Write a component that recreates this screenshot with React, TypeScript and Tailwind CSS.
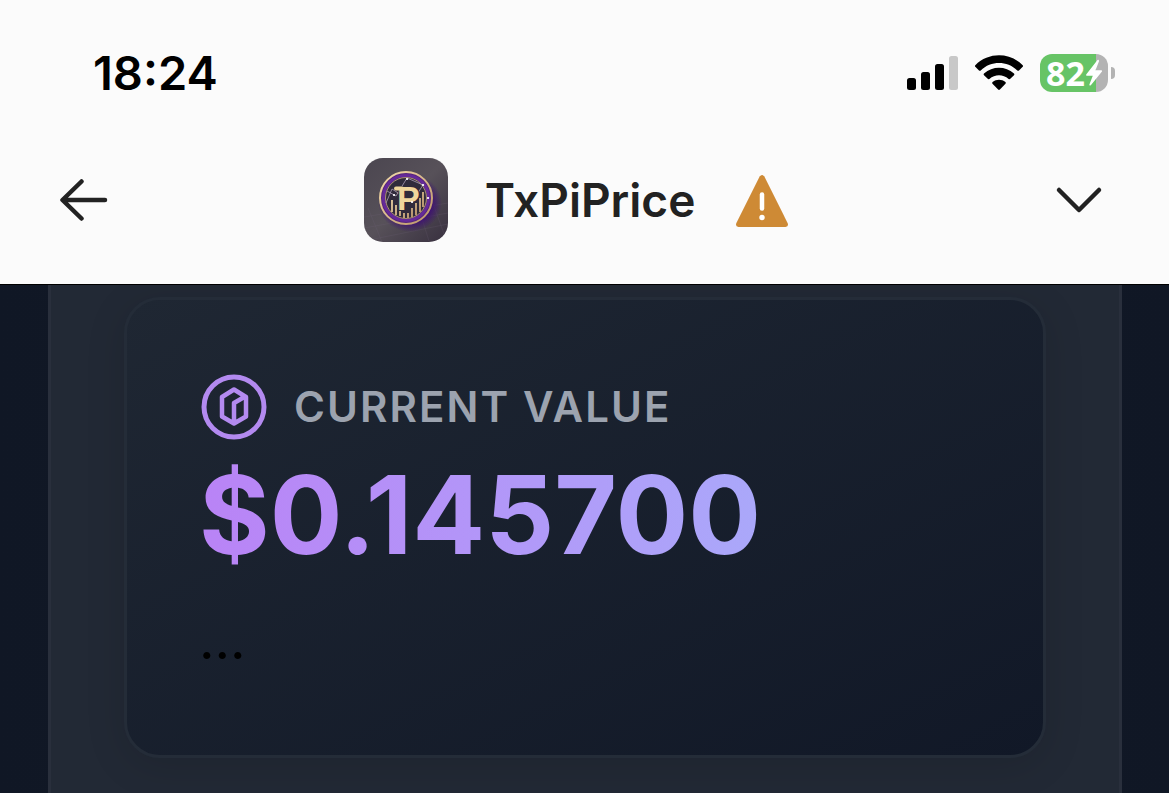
import { ReactNode } from 'react';

const bars = [
  { x: 0, h: 12, color: '#000' },
  { x: 14, h: 18, color: '#000' },
  { x: 28, h: 26, color: '#000' },
  { x: 42, h: 34, color: '#c8c8c8' },
];

function SignalIcon() {
  return (
    <svg width="51" height="34" viewBox="0 0 51 34" aria-label="Signal">
      {bars.map((b) => (
        <rect key={b.x} x={b.x} y={34 - b.h} width="9" height={b.h} rx="2.5" fill={b.color} />
      ))}
    </svg>
  );
}

function WifiIcon() {
  return (
    <svg width="50" height="36" viewBox="0 0 50 36" aria-label="Wi-Fi">
      <path d="M1.3 10.2C14.5-3 35.500-3 48.700 10.200Q49.500 11 48.700 11.800L45 15.400Q44.200 16.200 43.300 15.400C33 5.600 17 5.600 6.700 15.400Q5.800 16.200 5 15.400L1.300 11.800Q.5 11 1.300 10.200Z" />
      <path d="M10 18.500C18.500 10.800 31.500 10.800 40 18.500Q40.900 19.300 40 20.200L36.300 23.800Q35.500 24.600 34.600 23.900C29 19 21 19 15.400 23.900Q14.500 24.600 13.700 23.800L10 20.200Q9.100 19.300 10 18.500Z" />
      <path d="M18.600 27C22.300 24 27.700 24 31.400 27Q32.300 27.800 31.500 28.700L25.900 34.600Q25 35.500 24.100 34.600L18.500 28.700Q17.700 27.800 18.600 27Z" />
    </svg>
  );
}

function Battery() {
  return (
    <div className="flex items-center gap-[3px]">
      <div className="flex h-[38px] w-[68px] items-center rounded-[12px] bg-[linear-gradient(to_right,#67c466_82%,#b3b3b3_82%)] pl-[6px]">
        <span className="font-['Open_Sans',sans-serif] text-[34px] leading-[36px] font-bold text-white">82</span>
        <svg width="18" height="28" viewBox="0 0 18 28" fill="#fff" className="shrink-0">
          <path d="M12.500 1 1.200 15.500Q.6 16.800 2 16.800H7.800L4.400 25.500Q4.200 27.200 5.800 26.200L17 12.500Q17.500 11.200 16 11.200H10.500L14 2.200Q14 .3 12.500 1Z" />
        </svg>
      </div>
      <span className="h-[12px] w-[4px] rounded-r-full bg-[#b3b3b3]" />
    </div>
  );
}

function AppLogo() {
  return (
    <svg width="84" height="84" viewBox="0 0 84 84" className="shrink-0" aria-hidden="true">
      <defs>
        <linearGradient id="tile" x1="0" y1="0" x2="1" y2="1">
          <stop offset="0" stopColor="#4b4650" />
          <stop offset=".5" stopColor="#575159" />
          <stop offset="1" stopColor="#38303f" />
        </linearGradient>
        <linearGradient id="gold" x1="0" y1="0" x2="1" y2="1">
          <stop offset="0" stopColor="#f3dcab" />
          <stop offset="1" stopColor="#b99267" />
        </linearGradient>
        <radialGradient id="glow">
          <stop offset=".6" stopColor="#3c0878" />
          <stop offset="1" stopColor="#3c0878" stopOpacity="0" />
        </radialGradient>
      </defs>
      <rect width="84" height="84" rx="19" fill="url(#tile)" />
      <path d="M0 59 84 45M0 70 84 55M10 81 84 66M18 84 4 50M65 83 53 45M80 76 66 37" stroke="#70627a" strokeWidth=".5" opacity=".4" />
      <ellipse cx="46" cy="45" rx="32" ry="29" fill="url(#glow)" />
      <circle cx="42" cy="40" r="26" fill="#55257c" stroke="url(#gold)" strokeWidth="2" />
      <circle cx="42" cy="40" r="22.500" fill="#302b3b" stroke="#652a99" strokeWidth="3" />
      <circle cx="42" cy="40" r="20.500" fill="none" stroke="#caa983" strokeWidth=".8" />
      <path d="m23 33 9 5 11-18 16 7-11 17-20-13-6 14" fill="none" stroke="#a99cb4" strokeWidth=".8" />
      <path d="M28 42v12M32 47v10M36 51v7M40 55v5M44 55v5M48 50v9M52 45v12M56 40v14M59 34v15" stroke="url(#gold)" strokeWidth="1.800" />
      <text x="33" y="52" fill="#f0d69c" stroke="#302b3b" strokeWidth="2" paintOrder="stroke" className="font-['Liberation_Sans',sans-serif] text-[34px] font-bold">P</text>
      <path d="M32 30.500H38" stroke="#f0d69c" strokeWidth="4" strokeLinecap="round" />
      <path d="M43 21h.1M59 27h.1M30 37h.1M48 44h.1M64 40h.1" stroke="#fff" strokeWidth="2.200" strokeLinecap="round" />
    </svg>
  );
}

function WarningIcon() {
  return (
    <svg width="54" height="56" viewBox="0 -2 54 56" aria-label="Warning">
      <path d="M24.600 2.500Q27-.5 29.400 2.500L52.600 49Q54 52.500 50.500 53H3.500Q0 52.500 1.400 49Z" fill="#ce8a35" />
      <path d="M27 20.500V34.500" stroke="#fff" strokeWidth="4.500" strokeLinecap="round" />
      <circle cx="27" cy="43.500" r="2.700" fill="#fff" />
    </svg>
  );
}

function PiNetworkIcon() {
  return (
    <svg width="66" height="66" viewBox="-33 -33 66 66" fill="none" stroke="#b38af0" strokeWidth="5" strokeLinejoin="round" aria-hidden="true">
      <circle cx="0" cy="0" r="30" />
      <path d="M0-17.500 12-10V9.500L0 16.500-12 9.500V-10ZM0 16V-4L12-11" strokeWidth="4.500" />
    </svg>
  );
}

function IconButton({ label, children }: { label: string; children: ReactNode }) {
  return (
    <button type="button" aria-label={label} className="flex h-12 w-12 items-center justify-center text-[#222]">
      {children}
    </button>
  );
}

export default function App() {
  return (
    <div className="flex min-h-screen flex-col bg-[#111824] font-['Inter',sans-serif]">
      <header className="border-b border-black bg-[#fbfbfb]">
        <div className="flex h-[116px] items-end justify-between pr-[54px] pb-[15px] pl-[93px]">
          <span className="text-[47px] leading-[56px] font-semibold text-black">18:24</span>
          <div className="flex h-[56px] items-center gap-4">
            <SignalIcon />
            <WifiIcon />
            <Battery />
          </div>
        </div>
        <div className="flex h-[168px] items-center justify-between pr-[66px] pl-[60px]">
          <IconButton label="Back">
            <svg width="48" height="42" viewBox="0 0 48 42" fill="none" stroke="currentColor" strokeWidth="4.500" strokeLinecap="round" strokeLinejoin="round">
              <path d="M45 21H3M21.500 2.500 2.500 21 21.500 39.500" />
            </svg>
          </IconButton>
          <div className="flex items-center pr-[10px]">
            <AppLogo />
            <h1 className="pr-10 pl-[37px] text-[46px] leading-[56px] font-semibold text-[#222]">TxPiPrice</h1>
            <WarningIcon />
          </div>
          <IconButton label="Expand">
            <svg width="48" height="28" viewBox="0 0 48 28" fill="none" stroke="currentColor" strokeWidth="4.500" strokeLinecap="round" strokeLinejoin="round">
              <path d="M4 4 24 24 44 4" />
            </svg>
          </IconButton>
        </div>
      </header>

      <main className="flex flex-1 flex-col overflow-hidden bg-linear-to-r from-[#101725] via-[#131a27] to-[#101725] pr-[47px] pl-12">
        <div className="flex-1 border-x-3 border-[#292f3c] bg-[#222935] px-[73px] pt-3 pb-9">
          <section className="h-[461px] rounded-[36px] border-3 border-[#242c38] bg-linear-to-br from-[#1f2733] to-[#111827] px-[74px] pt-[74px] shadow-[0_8px_40px_rgba(0,0,0,0.12)]">
            <div className="flex items-center gap-[27px]">
              <PiNetworkIcon />
              <h2 className="text-[42px] leading-[60px] font-semibold tracking-wider text-[#9ca3af] uppercase">Current Value</h2>
            </div>
            <p className="-ml-[2px] w-fit bg-linear-to-r from-[#b983f6] to-[#aaa8fa] bg-clip-text text-[108px] leading-[150px] font-bold text-transparent">$0.145700</p>
            <p className="-ml-[2px] pt-5 text-[54px] leading-[60px] text-black">...</p>
          </section>
        </div>
      </main>
    </div>
  );
}
